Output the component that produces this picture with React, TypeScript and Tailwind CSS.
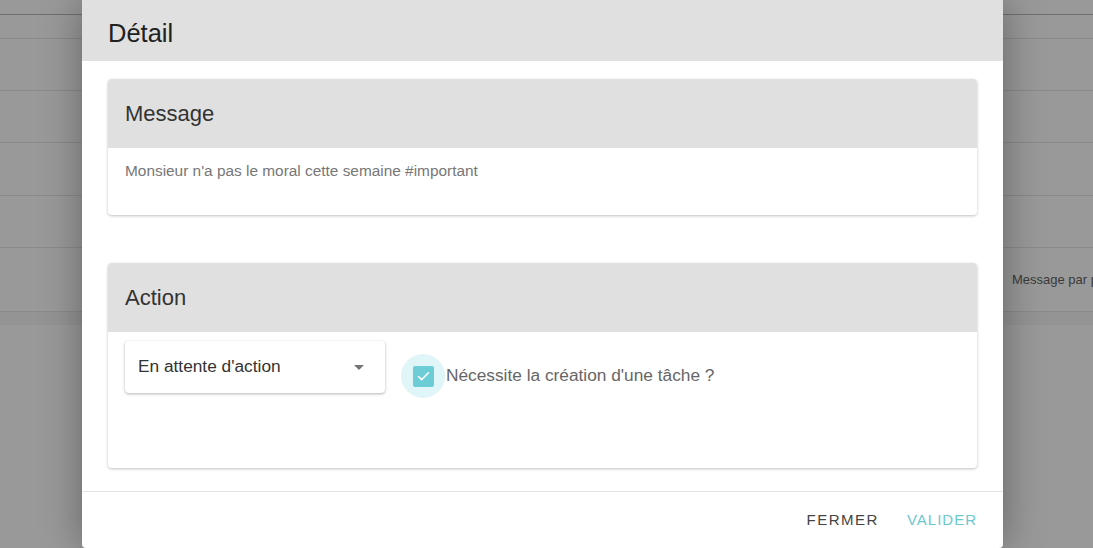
import { Check } from "lucide-react";

const rows = [24, 52, 52, 53, 52, 64];

export default function App() {
  return (
    <div
      className="relative h-[548px] w-[1093px] overflow-hidden bg-[#999999]"
      style={{ fontFamily: "'Liberation Sans', Arial, sans-serif" }}
    >
      {/* Page derrière l'overlay */}
      <div className="pt-[14px]">
        <div className="border-t border-[#6f6f6f]" />
        {rows.map((h, i) => (
          <div
            key={i}
            className="flex items-center justify-end border-b border-[#8a8a8a]"
            style={{ height: h }}
          >
            {i === rows.length - 1 && (
              <span className="w-[81px] overflow-hidden whitespace-nowrap text-[13px] text-[#3a3a3a]">
                Message par patient
              </span>
            )}
          </div>
        ))}
        <div className="h-[13px] bg-[#949494]" />
      </div>

      {/* Dialog */}
      <div className="absolute left-[82px] top-0 flex h-[548px] w-[921px] flex-col rounded-b bg-white shadow-[0_0_40px_rgba(0,0,0,0.35)]">
        <div className="flex h-[61px] items-center bg-[#e0e0e0] px-[26px] pt-[6px]">
          <h1 className="text-[25.5px] text-[#212121]">Détail</h1>
        </div>

        <div className="flex flex-1 flex-col gap-[48px] px-[26px] pt-[18px]">
          {/* Message */}
          <div className="overflow-hidden rounded bg-white shadow-[0_1px_3px_rgba(0,0,0,0.25)]">
            <div className="flex h-[69px] items-center bg-[#e0e0e0] px-[17px]">
              <h2 className="text-[22px] text-[#333333]">Message</h2>
            </div>
            <div className="h-[67px] px-[17px] pt-[11px] text-[15.4px] text-[#777777]">
              Monsieur n'a pas le moral cette semaine #important
            </div>
          </div>

          {/* Action */}
          <div className="overflow-hidden rounded bg-white shadow-[0_1px_3px_rgba(0,0,0,0.25)]">
            <div className="flex h-[69px] items-center bg-[#e0e0e0] px-[17px]">
              <h2 className="text-[22px] text-[#333333]">Action</h2>
            </div>
            <div className="flex h-[136px] items-start gap-4 px-[17px] pt-[9px]">
              <div className="flex h-[52px] w-[260px] items-center justify-between rounded bg-white pl-[13px] pr-[21px] shadow-[0_1px_3px_rgba(0,0,0,0.3)]">
                <span className="text-[17.3px] text-[#333333]">En attente d'action</span>
                <span className="h-0 w-0 border-x-[5px] border-t-[5px] border-x-transparent border-t-[#757575]" />
              </div>
              <label className="mt-[13px] flex items-center">
                <span className="flex h-[44px] w-[44px] items-center justify-center rounded-full bg-[#e0f5f7]">
                  <span className="flex h-[21px] w-[21px] items-center justify-center rounded-[2px] bg-[#6ccdd6]">
                    <Check className="h-[15px] w-[15px] text-white" strokeWidth={2.5} />
                  </span>
                </span>
                <span className="ml-[1px] text-[17.3px] text-[#666666]">
                  Nécessite la création d'une tâche ?
                </span>
              </label>
            </div>
          </div>
        </div>

        <div className="mt-[23px] flex h-[57px] items-center justify-end gap-[28px] border-t border-[#e5e5e5] pr-[26px]">
          <button className="text-[15px] tracking-[1.5px] text-[#444444]">FERMER</button>
          <button className="text-[15px] tracking-[1px] text-[#6cc7d0]">VALIDER</button>
        </div>
      </div>
    </div>
  );
}
